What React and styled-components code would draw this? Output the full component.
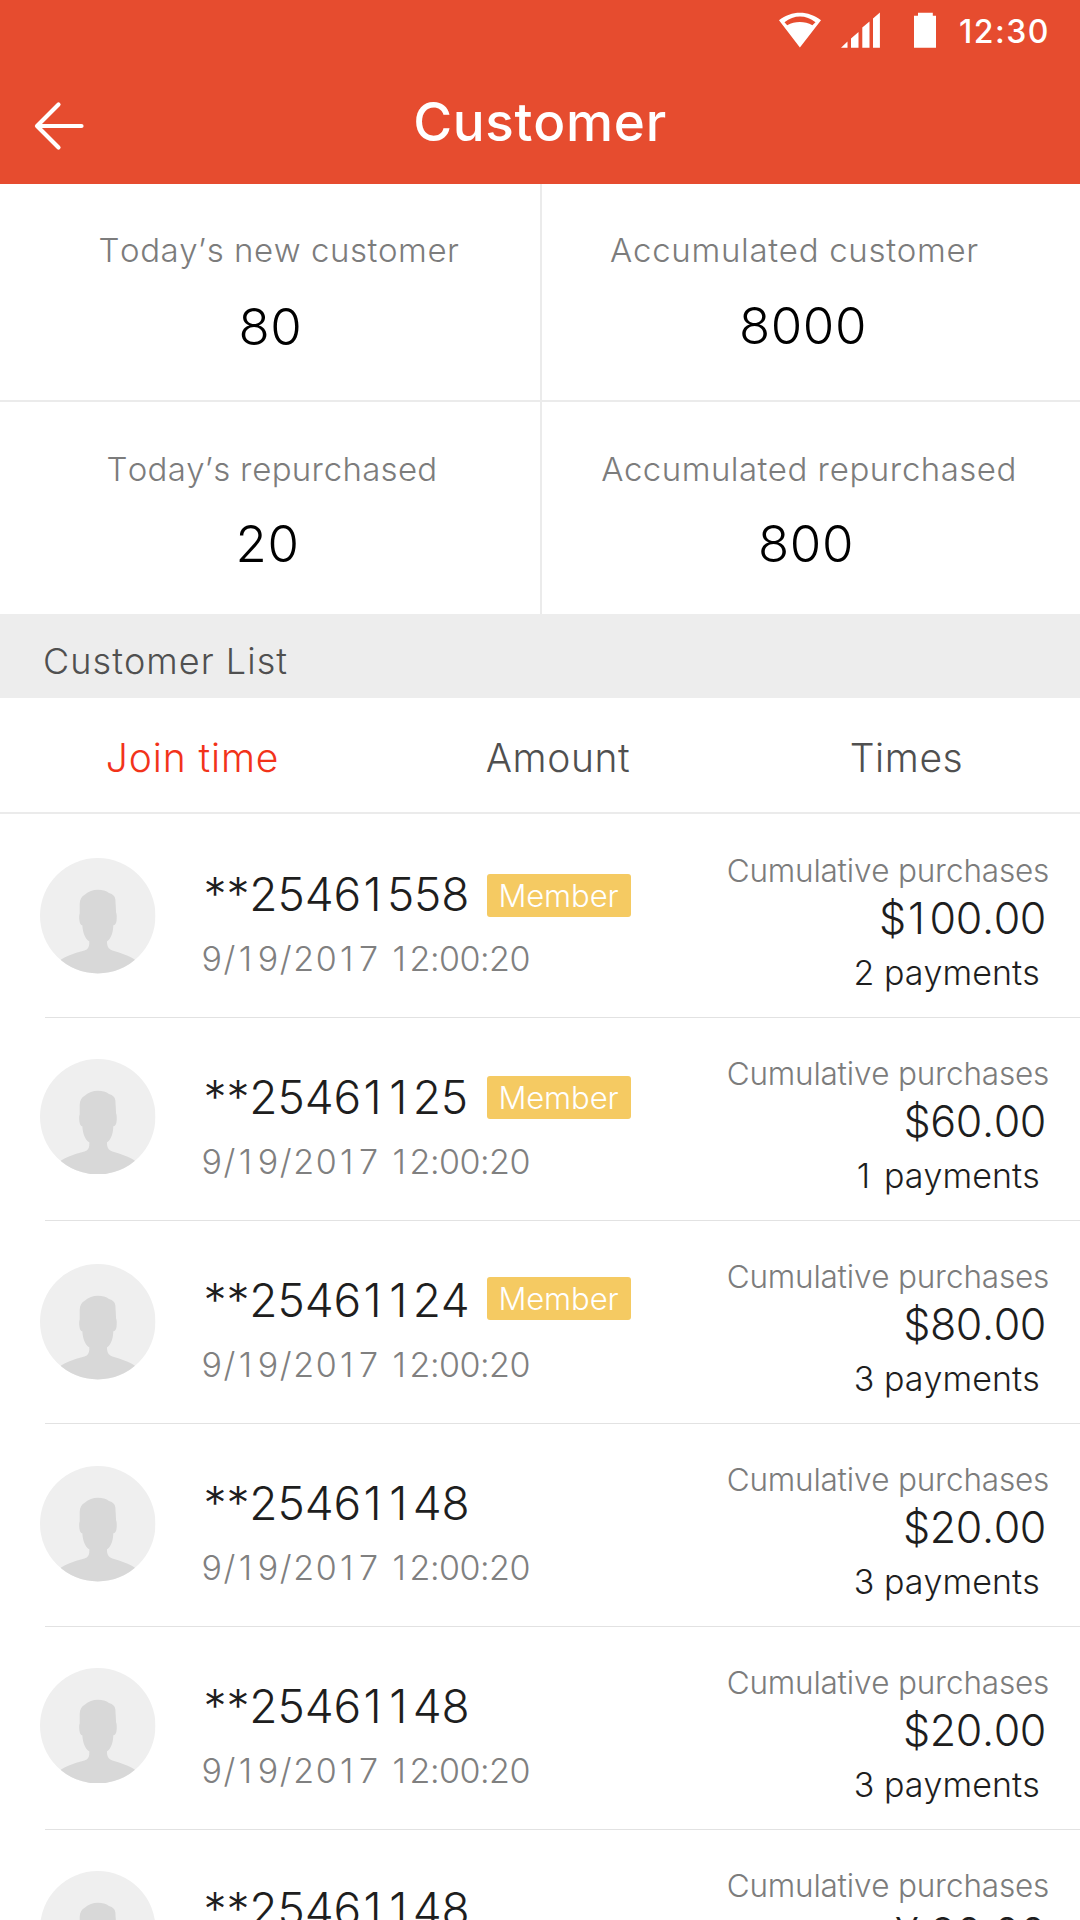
import React from "react";
import styled, { createGlobalStyle } from "styled-components";

const GlobalStyle = createGlobalStyle`
  * {
    box-sizing: border-box;
  }
  html,
  body {
    margin: 0;
    padding: 0;
    background: #fff;
  }
  body {
    height: 1920px;
    overflow: hidden;
    font-family: Inter, "Liberation Sans", sans-serif;
    font-weight: 330;
    font-kerning: none;
  }
`;

const Screen = styled.div`
  width: 1080px;
  height: 1920px;
  overflow: hidden;
  background: #fff;
`;

const Header = styled.header`
  height: 184px;
  background: #e64c2f;
  color: #fff;
`;

const StatusBar = styled.div`
  display: flex;
  height: 60px;
  padding: 12px 0 0 779px;
  svg {
    flex: none;
    display: block;
  }
  .signal {
    margin-left: 20px;
  }
  .battery {
    margin-left: 34px;
  }
`;

const Clock = styled.span`
  margin-left: 23px;
  font-size: 32px;
  font-weight: 450;
  line-height: 40px;
  letter-spacing: 1.5px;
`;

const NavBar = styled.div`
  display: grid;
  grid-template-columns: 120px 1fr 120px;
  align-items: start;
`;

const BackButton = styled.button`
  display: block;
  padding: 40px 0 0 34px;
  border: 0;
  background: none;
  svg {
    display: block;
  }
`;

const Title = styled.h1`
  margin: 0;
  text-align: center;
  font-size: 53px;
  font-weight: 500;
  line-height: 124px;
  letter-spacing: 0.7px;
`;

const Stats = styled.section`
  display: grid;
  grid-template-columns: 542px 538px;
  grid-template-rows: 218px 212px;
`;

const Stat = styled.div`
  display: flex;
  flex-direction: column;
  align-items: center;
  padding-top: ${(p) => p.$top}px;
  border-right: ${(p) => (p.$right ? "2px solid #ebebeb" : "0")};
  border-bottom: ${(p) => (p.$bottom ? "2px solid #ebebeb" : "0")};
`;

const StatLabel = styled.div`
  margin-left: ${(p) => p.$shift}px;
  color: #7c7c7c;
  font-size: 33px;
  line-height: 44px;
  letter-spacing: ${(p) => p.$spacing}px;
  white-space: nowrap;
`;

const StatValue = styled.div`
  margin-top: ${(p) => p.$gap}px;
  margin-left: ${(p) => p.$shift}px;
  color: #000;
  font-size: 51px;
  line-height: 60px;
  letter-spacing: 0.6px;
`;

const SectionTitle = styled.h2`
  height: 84px;
  margin: 0;
  padding: 5px 0 0 43px;
  background: #ededed;
  color: #505050;
  font-size: 36px;
  font-weight: inherit;
  line-height: 84px;
  letter-spacing: 1.05px;
`;

const Tabs = styled.nav`
  display: grid;
  grid-template-columns: 385px 346px 351px;
  height: 116px;
  padding-top: 3px;
  border-bottom: 2px solid #ebebeb;
`;

const Tab = styled.a`
  color: ${(p) => (p.$active ? "#f2331a" : "#505050")};
  font-size: 39px;
  line-height: 114px;
  letter-spacing: ${(p) => (p.$active ? 0.9 : 0.6)}px;
  text-align: center;
`;

const List = styled.div`
  padding-top: 1px;
`;

const Row = styled.div`
  display: flex;
  height: 202.1px;
  padding-left: 40px;
`;

const Divider = styled.div`
  height: 1px;
  margin-left: 45px;
  background: #e2e2e2;
`;

const Avatar = styled.svg`
  flex: none;
  display: block;
  width: 115.5px;
  height: 115.5px;
  margin-top: ${(p) => p.$top}px;
`;

const Info = styled.div`
  flex: 1;
  padding: 51px 0 0 45px;
`;

const NameLine = styled.div`
  display: flex;
  align-items: flex-start;
  height: 56px;
  padding-left: 3px;
`;

const Name = styled.div`
  width: 283px;
  color: #1e1e1e;
  font-size: 46px;
  line-height: 56px;
  letter-spacing: -0.1px;
`;

// gives the narrow "1" the same advance as the other digits
const One = styled.span`
  margin: 0 0.12em 0 0.05em;
`;

const Badge = styled.span`
  width: 144px;
  height: 43px;
  margin-top: ${(p) => p.$top}px;
  border-radius: 3px;
  background: #f5ca62;
  color: #fff;
  font-size: 31px;
  line-height: 44px;
  letter-spacing: -0.1px;
  text-align: center;
`;

const JoinedAt = styled.div`
  margin-top: 15px;
  padding-left: 1px;
  color: #808080;
  font-size: 34px;
  line-height: 44px;
  letter-spacing: 1.6px;
  white-space: nowrap;
`;

const Time = styled.span`
  letter-spacing: -0.5px;
`;

const Purchases = styled.div`
  flex: none;
  padding: 36px 31px 0 0;
  text-align: right;
  white-space: nowrap;
`;

const PurchasesLabel = styled.div`
  color: #7c7c7c;
  font-size: 31.5px;
  line-height: 40px;
  letter-spacing: -0.22px;
`;

const Amount = styled.div`
  margin-top: 2px;
  padding-right: 3px;
  color: #1e1e1e;
  font-size: 43px;
  line-height: 50px;
  letter-spacing: -0.4px;
`;

const Payments = styled.div`
  margin-top: 10px;
  padding-right: 9px;
  color: #1e1e1e;
  font-size: 34px;
  line-height: 40px;
  letter-spacing: 0.1px;
`;

const stats = [
  { label: "Today’s new customer", value: "80", top: 44, gap: 25, shift: 18, valueShift: 1, spacing: 0.55 },
  { label: "Accumulated customer", value: "8000", top: 44, gap: 24, shift: -33, valueShift: -16, spacing: 0.7 },
  { label: "Today’s repurchased", value: "20", top: 45, gap: 23, shift: 4, valueShift: -5, spacing: 0.3 },
  { label: "Accumulated repurchased", value: "800", top: 45, gap: 23, shift: -4, valueShift: -10, spacing: 0.46 },
];

const tabs = ["Join time", "Amount", "Times"];

const customers = [
  { name: "**25461558", badgeTop: 8, amount: "$100.00", payments: 2, avatarTop: 43 },
  { name: "**25461125", badgeTop: 7, amount: "$60.00", payments: 1, avatarTop: 40.8 },
  { name: "**25461124", badgeTop: 5, amount: "$80.00", payments: 3, avatarTop: 43.3 },
  { name: "**25461148", amount: "$20.00", payments: 3, avatarTop: 42 },
  { name: "**25461148", amount: "$20.00", payments: 3, avatarTop: 40.2 },
  { name: "**25461148", amount: "¥ 20.00", payments: 3, avatarTop: 40.2 },
];

function Digits({ children }) {
  return String(children)
    .split(/(1)/)
    .map((part, i) => (part === "1" ? <One key={i}>1</One> : part));
}

function WifiIcon() {
  return (
    <svg width="42" height="36" viewBox="0 0 42 36" fill="#fff">
      <path
        fillRule="evenodd"
        d="M0 8.2C12.500-1.800 29.500-1.800 42 8.200L20.900 35.400ZM5.500 10.200L8.200 13.200C16 9 25.600 9 33.400 13.200L36.500 10.200C27 2.600 15 2.600 5.500 10.200Z"
      />
    </svg>
  );
}

function SignalIcon() {
  return (
    <svg className="signal" width="39" height="36" viewBox="0 0 39 36" fill="#fff">
      <path d="M0 35.700L6.500 29.500V35.700ZM10 35.700V26.500L17.500 20V35.700ZM21.300 35.700V15.600L28.500 9.600V35.700ZM32 35.700V6.600L38.900 0.600V35.700Z" />
    </svg>
  );
}

function BatteryIcon() {
  return (
    <svg className="battery" width="22" height="36" viewBox="0 0 22 36" fill="#fff">
      <path d="M4 0.700H18.800V3.700H22V35.700H0V3.700H4Z" />
    </svg>
  );
}

function BackIcon() {
  return (
    <svg width="52" height="52" viewBox="0 0 52 52" fill="none" stroke="#fff" strokeWidth="4.200" strokeLinecap="round">
      <path d="M24.500 4.500L3 26L24.500 47.500" strokeLinejoin="round" />
      <path d="M4 26H47.500" />
    </svg>
  );
}

function Person({ top, id }) {
  return (
    <Avatar $top={top} viewBox="0 0 115.500 115.500">
      <clipPath id={id}>
        <circle cx="57.750" cy="57.750" r="57.750" />
      </clipPath>
      <g clipPath={`url(#${id})`}>
        <rect width="115.500" height="115.500" fill="#efefef" />
        <path
          fill="#d8d8d8"
          d="M39.700 55.500V45.700C39.900 41.500 41.500 38.400 44.700 36.700C48.500 33.200 53 31.700 58 31.700C62.300 31.700 66.200 32.600 69 34.900C72.800 36.200 75.100 38 75.400 41.700L76.100 54.600C76.900 56 76.900 60 76.500 63C76.200 65.500 75 67.200 73.300 67.200C73.200 71 72.700 76 70.300 79.700C69.300 81.500 68 82.600 67 83.300C66.800 87 67.700 89.800 70.300 91.500C73 93.200 76.500 93.500 79.700 94.700C85 96.500 90.500 98.600 94.700 101.500V116H21V101.500C25.500 98.600 31 96.500 36.300 94.700C40 93.500 44 93.200 46.700 91.500C49 89.800 49.500 87 49.300 83.300C48 82.600 46.800 81.500 45.700 79.700C43.300 76 42.600 71 42.300 67.200C40.800 67.200 39.800 65.500 39.500 63C39 60 39 57 39.700 55.500Z"
        />
      </g>
    </Avatar>
  );
}

export default function App() {
  return (
    <Screen>
      <GlobalStyle />
      <Header>
        <StatusBar>
          <WifiIcon />
          <SignalIcon />
          <BatteryIcon />
          <Clock>12:30</Clock>
        </StatusBar>
        <NavBar>
          <BackButton aria-label="Back">
            <BackIcon />
          </BackButton>
          <Title>Customer</Title>
        </NavBar>
      </Header>

      <Stats>
        {stats.map((s, i) => (
          <Stat key={s.label} $top={s.top} $right={i % 2 === 0} $bottom={i < 2}>
            <StatLabel $shift={s.shift} $spacing={s.spacing}>
              {s.label}
            </StatLabel>
            <StatValue $shift={s.valueShift} $gap={s.gap}>
              {s.value}
            </StatValue>
          </Stat>
        ))}
      </Stats>

      <SectionTitle>Customer List</SectionTitle>
      <Tabs>
        {tabs.map((tab, i) => (
          <Tab key={tab} $active={i === 0}>
            {tab}
          </Tab>
        ))}
      </Tabs>

      <List>
        {customers.map((c, i) => (
          <React.Fragment key={i}>
            <Row>
              <Person top={c.avatarTop} id={`avatar-${i}`} />
              <Info>
                <NameLine>
                  <Name>
                    <Digits>{c.name}</Digits>
                  </Name>
                  {c.badgeTop && <Badge $top={c.badgeTop}>Member</Badge>}
                </NameLine>
                <JoinedAt>
                  <Digits>9/19/2017</Digits>{" "}
                  <Time>
                    <Digits>12:00:20</Digits>
                  </Time>
                </JoinedAt>
              </Info>
              <Purchases>
                <PurchasesLabel>Cumulative purchases</PurchasesLabel>
                <Amount>
                  <Digits>{c.amount}</Digits>
                </Amount>
                <Payments>
                  <Digits>{c.payments}</Digits> payments
                </Payments>
              </Purchases>
            </Row>
            <Divider />
          </React.Fragment>
        ))}
      </List>
    </Screen>
  );
}
